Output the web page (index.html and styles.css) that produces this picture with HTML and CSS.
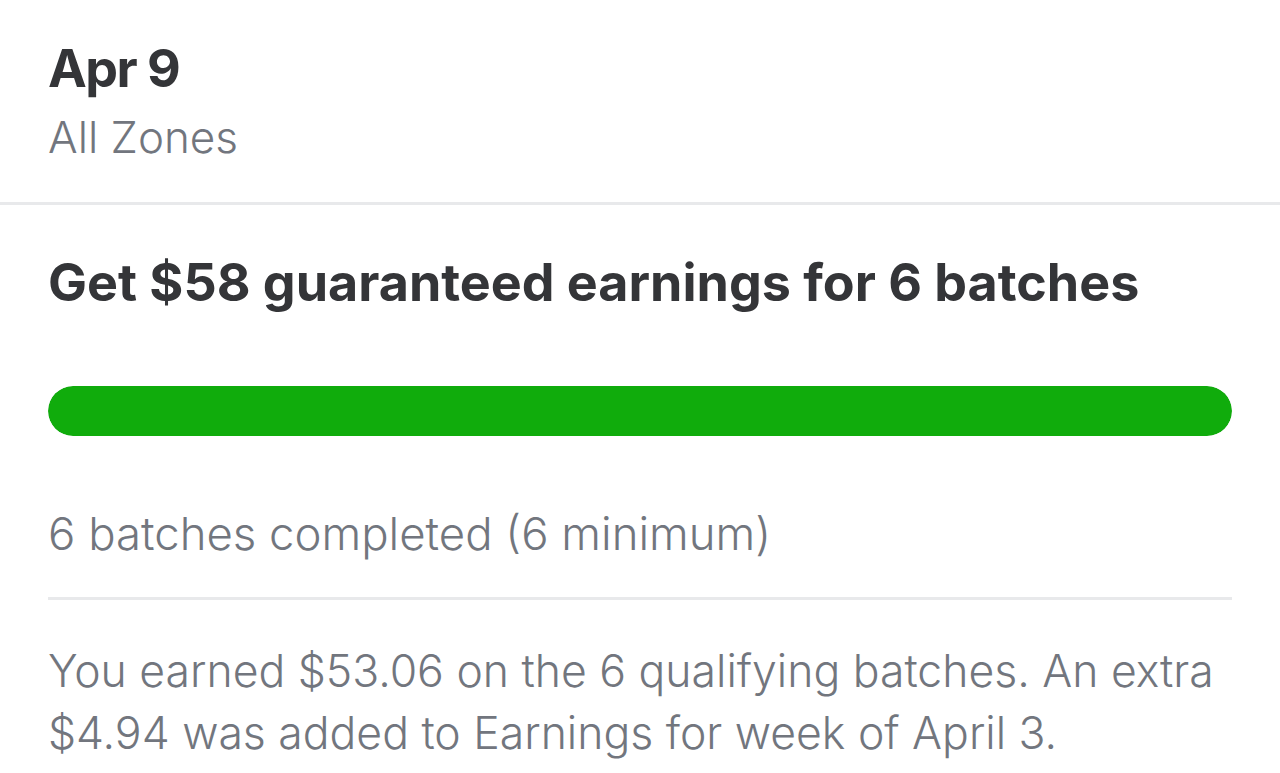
FILE: index.html
```html
<!DOCTYPE html>
<html lang="en">
<head>
    <meta charset="UTF-8">
    <meta name="viewport" content="width=device-width, initial-scale=1.0">
    <title>Apr 9 - All Zones</title>
    <link rel="stylesheet" href="styles.css">
</head>
<body>
    <div class="day-header">
        <h1>Apr 9</h1>
        <p>All Zones</p>
    </div>

    <div class="promo">
        <h2>Get $58 guaranteed earnings for 6 batches</h2>

        <div class="progress">
            <div class="progress-fill" style="width: 100%"></div>
        </div>

        <div class="promo-status">6 batches completed (6 minimum)</div>

        <p class="promo-note">You earned $53.06 on the 6 qualifying batches. An extra $4.94 was added to Earnings for week of April 3.</p>
    </div>
</body>
</html>
```

FILE: styles.css
```css
* {
    margin: 0;
    padding: 0;
    box-sizing: border-box;
}

body {
    font-family: 'Inter', 'Roboto', sans-serif;
    background: white;
    color: #343538;
    overflow: hidden;
}

.day-header {
    padding: 36px 48px 0;
    height: 205px;
    border-bottom: 3px solid #e8e9eb;
}

.day-header h1 {
    font-size: 52px;
    font-weight: 700;
    line-height: 66px;
    letter-spacing: -1.5px;
}

.day-header p {
    font-size: 44px;
    font-weight: 300;
    color: #72767e;
    line-height: 70px;
}

.promo {
    padding: 0 48px;
}

.promo h2 {
    margin-top: 46px;
    font-size: 52px;
    font-weight: 650;
    line-height: 64px;
}

.progress {
    margin-top: 71px;
    height: 50px;
    background: #e8e9eb;
    border-radius: 25px;
    overflow: hidden;
}

.progress-fill {
    height: 100%;
    background: #10ac0c;
    border-radius: 25px;
}

.promo-status {
    font-size: 45.5px;
    font-weight: 300;
    color: #72767e;
    line-height: 64px;
    padding: 66px 0 31px;
    border-bottom: 3px solid #e8e9eb;
}

.promo-note {
    margin-top: 40px;
    font-size: 44.5px;
    font-weight: 300;
    color: #72767e;
    line-height: 62px;
}
```
